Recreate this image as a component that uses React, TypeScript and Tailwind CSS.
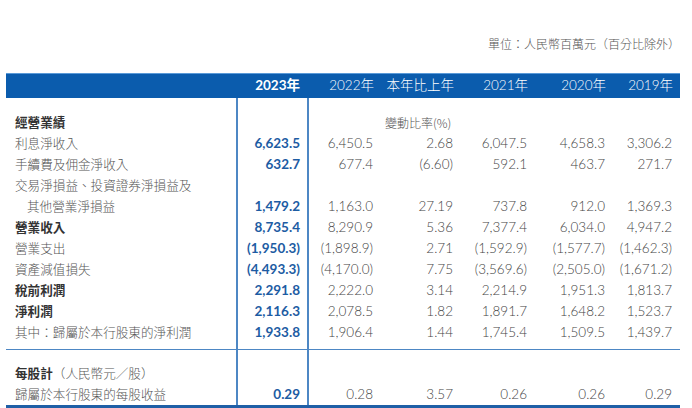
import React from "react";

type Row = {
  label: string;
  bold?: boolean;
  indent?: boolean;
  v?: string[];
  note?: string;
};

const rows: Row[] = [
  { label: "經營業績", bold: true, note: "變動比率(%)" },
  { label: "利息淨收入", v: ["6,623.5", "6,450.5", "2.68", "6,047.5", "4,658.3", "3,306.2"] },
  { label: "手續費及佣金淨收入", v: ["632.7", "677.4", "(6.60)", "592.1", "463.7", "271.7"] },
  { label: "交易淨損益、投資證券淨損益及" },
  { label: "其他營業淨損益", indent: true, v: ["1,479.2", "1,163.0", "27.19", "737.8", "912.0", "1,369.3"] },
  { label: "營業收入", bold: true, v: ["8,735.4", "8,290.9", "5.36", "7,377.4", "6,034.0", "4,947.2"] },
  { label: "營業支出", v: ["(1,950.3)", "(1,898.9)", "2.71", "(1,592.9)", "(1,577.7)", "(1,462.3)"] },
  { label: "資產減值損失", v: ["(4,493.3)", "(4,170.0)", "7.75", "(3,569.6)", "(2,505.0)", "(1,671.2)"] },
  { label: "稅前利潤", bold: true, v: ["2,291.8", "2,222.0", "3.14", "2,214.9", "1,951.3", "1,813.7"] },
  { label: "淨利潤", bold: true, v: ["2,116.3", "2,078.5", "1.82", "1,891.7", "1,648.2", "1,523.7"] },
  { label: "其中：歸屬於本行股東的淨利潤", v: ["1,933.8", "1,906.4", "1.44", "1,745.4", "1,509.5", "1,439.7"] },
];

const rows2: Row[] = [
  { label: "每股計", bold: true, note: "" },
  { label: "歸屬於本行股東的每股收益", v: ["0.29", "0.28", "3.57", "0.26", "0.26", "0.29"] },
];

const cols = "grid grid-cols-[230px_73px_72px_80px_74px_78px_67px]";
const cjk = "font-['Noto_Sans_CJK_TC',sans-serif]";
const num = "font-['Lato','Noto_Sans_CJK_TC',sans-serif]";

function BodyRow({ r, sub }: { r: Row; sub?: boolean }) {
  return (
    <div className={`${cols} h-[21px] items-center`}>
      <div
        className={`${cjk} text-[12.6px] leading-none pl-[9px] ${r.indent ? "pl-[21px]" : ""} ${
          r.bold ? "font-bold text-[#333]" : "font-light text-[#555]"
        }`}
      >
        {r.label}
        {sub && <span className="font-light text-[#555]">（人民幣元／股）</span>}
      </div>
      <div className={`h-full border-x-2 border-[#4d87c4] flex items-center justify-end pr-[7px] ${num} font-bold text-[13.5px] text-[#1d5ca3]`}>
        {r.v ? r.v[0] : ""}
      </div>
      {r.note !== undefined && !r.v ? (
        <>
          <div />
          <div className={`${cjk} font-light text-[12px] text-[#555] leading-none pl-[4px] whitespace-nowrap`}>{r.note}</div>
          <div />
          <div />
          <div />
        </>
      ) : (
        [1, 2, 3, 4, 5].map((i) => (
          <div key={i} className={`text-right pr-[8px] ${num} font-light text-[13.5px] text-[#444] leading-none`}>
            {r.v ? r.v[i] : ""}
          </div>
        ))
      )}
    </div>
  );
}

function Spacer({ h }: { h: string }) {
  return (
    <div className={`${cols} ${h}`}>
      <div />
      <div className="border-x-2 border-[#4d87c4]" />
    </div>
  );
}

export default function App() {
  const heads = ["2022年", "本年比上年", "2021年", "2020年", "2019年"];
  return (
    <div className="w-[692px] h-[408px] bg-white overflow-hidden">
      <div className="pt-[31px] pr-[12px] text-right">
        <span className={`${cjk} font-light text-[12px] text-[#555] leading-none`}>單位：人民幣百萬元（百分比除外）</span>
      </div>
      <div className="ml-[6px] w-[674px] mt-[18px]">
        <div className={`${cols} h-[25px] items-center bg-[#0b5cad] border-t border-[#5a9ad8]`}>
          <div />
          <div className={`text-right pr-[9px] ${num} font-bold text-[13.5px] text-white leading-none`}>2023年</div>
          {heads.map((h) => (
            <div key={h} className={`text-right pr-[7px] ${num} font-light text-[13.5px] text-white leading-none`}>
              {h}
            </div>
          ))}
        </div>
        <Spacer h="h-[14px]" />
        {rows.map((r, i) => (
          <BodyRow key={i} r={r} />
        ))}
        <Spacer h="h-[6px]" />
        <div className="border-t border-[#4d87c4]" />
        <Spacer h="h-[13px]" />
        <BodyRow r={rows2[0]} sub />
        <BodyRow r={rows2[1]} />
        <div className="border-t-[3px] border-[#1f5fa6]" />
      </div>
    </div>
  );
}
